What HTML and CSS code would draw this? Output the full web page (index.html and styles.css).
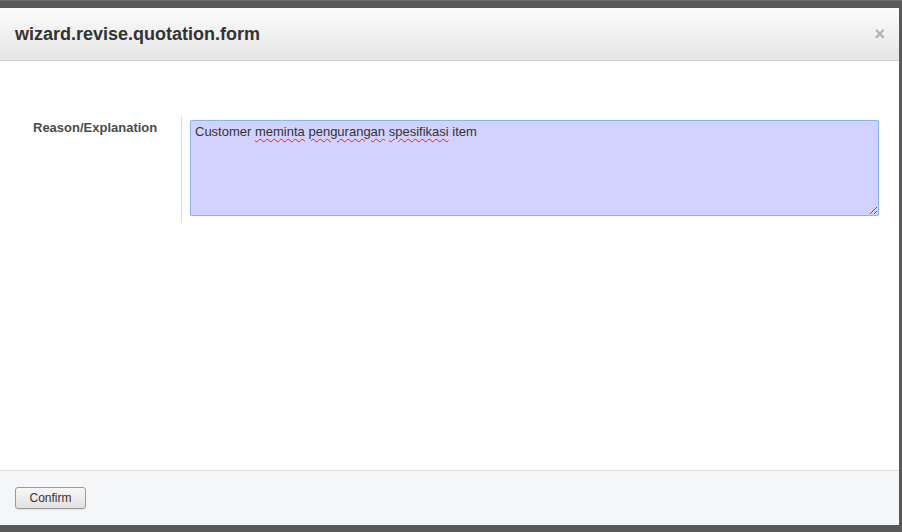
FILE: index.html
```html
<!DOCTYPE html>
<html>
<head>
<meta charset="utf-8">
<link rel="stylesheet" href="styles.css">
</head>
<body>
<div class="backdrop">
  <div class="dialog">
    <div class="dlg-header">
      <h3 class="dlg-title">wizard.revise.quotation.form</h3>
      <span class="dlg-close">×</span>
    </div>
    <div class="dlg-body">
      <div class="form-row">
        <div class="form-label">Reason/Explanation</div>
        <div class="form-field">
          <div class="textarea">Customer <span class="spell">meminta</span> <span class="spell">pengurangan</span> <span class="spell">spesifikasi</span> item</div>
        </div>
      </div>
    </div>
    <div class="dlg-footer">
      <button class="btn">Confirm</button>
    </div>
  </div>
</div>
</body>
</html>
```
FILE: styles.css
```css
html, body {
  margin: 0;
  padding: 0;
}
body {
  font-family: "Liberation Sans", Arial, sans-serif;
  color: #333;
}
.backdrop {
  width: 902px;
  height: 532px;
  box-sizing: border-box;
  background: #595959;
  border-top: 1px solid #6e6e6e;
  padding: 7px 3px 7px 0;
}
.dialog {
  width: 899px;
  height: 517px;
  display: flex;
  flex-direction: column;
  background: #fff;
}
.dlg-header {
  height: 52px;
  border-bottom: 1px solid #cfcfcf;
  background: linear-gradient(#fcfcfc, #e5e5e5);
  display: flex;
  align-items: center;
  justify-content: space-between;
  padding: 0 15px;
}
.dlg-title {
  margin: 0;
  font-size: 18px;
  font-weight: bold;
  color: #333;
  padding-top: 1px;
}
.dlg-close {
  font-size: 18px;
  font-weight: bold;
  color: #b0b0b0;
  margin-right: -1px;
  line-height: 1;
}
.dlg-body {
  flex: 1;
  padding-top: 55px;
}
.form-row {
  display: flex;
}
.form-label {
  width: 148px;
  padding-left: 33px;
  padding-top: 4px;
  border-right: 1px solid #ddd;
  font-size: 13px;
  font-weight: bold;
  color: #4c4c4c;
}
.form-field {
  flex: 1;
  padding: 4px 20px 7px 8px;
}
.textarea {
  height: 86px;
  box-sizing: content-box;
  border: 1px solid #8db4ee;
  border-radius: 2px;
  background: #d2d2fe;
  padding: 3px 4px 5px 4px;
  font-size: 13px;
  color: #333;
  resize: both;
  overflow: auto;
  box-shadow: 0 0 1px #a9c7f5;
}
.spell {
  text-decoration: underline wavy #e02020;
  text-decoration-thickness: 1px;
  text-underline-offset: 2px;
}
.dlg-footer {
  height: 55px;
  border-top: 1px solid #dcdcdc;
  background: #f5f6f8;
  padding: 16px 15px 0;
  box-sizing: border-box;
}
.btn {
  width: 71px;
  height: 22px;
  border: 1px solid #9a9a9a;
  border-radius: 3px;
  background: linear-gradient(#f7f7f7, #e1e1e1);
  font-family: "Liberation Sans", Arial, sans-serif;
  font-size: 12px;
  color: #333;
  padding: 0 0 1px;
  box-shadow: 0 1px 1px rgba(0,0,0,0.08);
}
```
